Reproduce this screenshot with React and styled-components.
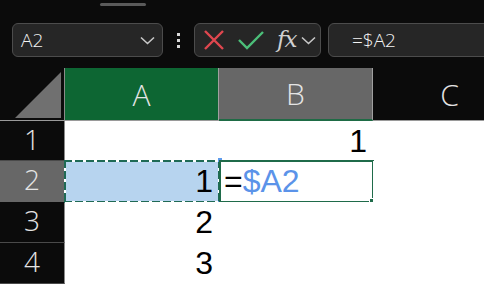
import styled, { createGlobalStyle } from "styled-components";

const GlobalStyle = createGlobalStyle`
  body {
    margin: 0;
    background: #0b0b0b;
    overflow: hidden;
  }
`;

const Page = styled.div`
  width: 484px;
  height: 284px;
  overflow: hidden;
  background: #0b0b0b;
  font-family: "Open Sans", "Noto Sans", sans-serif;
`;

const Top = styled.div`
  height: 68px;
  padding-top: 3px;
  box-sizing: border-box;
`;

const Grabber = styled.div`
  width: 46px;
  height: 3px;
  margin-left: 100px;
  border-radius: 2px;
  background: #5a5a5a;
`;

const Toolbar = styled.div`
  display: flex;
  align-items: center;
  margin-top: 17px;
  padding-left: 12px;
`;

const Box = styled.div`
  height: 34px;
  box-sizing: border-box;
  display: flex;
  align-items: center;
  flex-shrink: 0;
  background: #262626;
  border: 1px solid #4c4c4c;
  border-radius: 6px;
`;

const NameBox = styled(Box)`
  width: 151px;
  padding: 0 7px 0 8px;
  justify-content: space-between;
  color: #f4f4f4;
  font-size: 19px;
  font-weight: 300;
`;

const Dots = styled.div`
  display: flex;
  flex-direction: column;
  gap: 3px;
  margin: 0 14px 0 14px;

  span {
    width: 3px;
    height: 3px;
    background: #d8d8d8;
  }
`;

const ButtonsBox = styled(Box)`
  width: 127px;
  padding-left: 8px;
`;

const Fx = styled.span`
  font-family: "DejaVu Serif", "Liberation Serif", serif;
  font-style: italic;
  font-weight: 400;
  font-size: 23px;
  color: #d0d0d0;
  margin: -3px 5px 0 12px;
  letter-spacing: -1px;
`;

const FormulaBox = styled(Box)`
  width: 200px;
  margin-left: 7px;
  padding-left: 23px;
  color: #f4f4f4;
  font-size: 19px;
  font-weight: 300;
`;

const Sheet = styled.div`
  display: grid;
  grid-template-columns: 65px 154px 154px 154px;
  grid-template-rows: 53px 40px 41px 41px 41px;
  font-family: "Liberation Sans", Arial, sans-serif;
`;

const Corner = styled.div`
  background: #0b0b0b;
  border-right: 1px solid #8a8a8a;
  border-bottom: 1px solid #9a9a9a;
  display: flex;
  align-items: flex-end;
  justify-content: flex-end;
  padding: 0 3px 2px 0;
`;

const ColHead = styled.div`
  display: flex;
  align-items: center;
  justify-content: center;
  font-family: "Open Sans", "Noto Sans", sans-serif;
  font-weight: 300;
  font-size: 30px;
  color: #e4e4e4;
  background: ${(p) => (p.$sel ? "#0d6633" : p.$active ? "#676767" : "#0b0b0b")};
  border-right: 1px solid ${(p) => (p.$sel || p.$active ? "#a0a0a0" : "#0b0b0b")};
  border-bottom: ${(p) => (p.$active ? "2px solid #1e6b45" : "1px solid #9a9a9a")};
`;

const RowHead = styled.div`
  display: flex;
  align-items: center;
  justify-content: center;
  font-family: "Open Sans", "Noto Sans", sans-serif;
  font-weight: 300;
  font-size: 28px;
  color: #e4e4e4;
  background: ${(p) => (p.$active ? "#676767" : "#0b0b0b")};
  border-right: 1px solid #8a8a8a;
  border-bottom: 1px solid ${(p) => (p.$active ? "#676767" : "#4a4a4a")};
  padding-bottom: 4px;
`;

const Cell = styled.div`
  position: relative;
  display: flex;
  align-items: center;
  justify-content: ${(p) => (p.$left ? "flex-start" : "flex-end")};
  padding: 0 6px 0 5px;
  background: ${(p) => (p.$fill ? "#b7d4ef" : "#ffffff")};
  font-size: 32px;
  color: #000;
  white-space: nowrap;
`;

const CopyAnts = styled.div`
  position: absolute;
  inset: -1px -1px -1px -1px;
  background:
    repeating-linear-gradient(90deg, #1f6a55 0 8px, #fff 8px 11px) top / 100% 2px no-repeat,
    repeating-linear-gradient(90deg, #1f6a55 0 8px, #fff 8px 11px) bottom / 100% 2px no-repeat,
    repeating-linear-gradient(180deg, #1f6a55 0 8px, #fff 8px 11px) left / 2px 100% no-repeat,
    repeating-linear-gradient(180deg, #1f6a55 0 8px, #fff 8px 11px) right / 2px 100% no-repeat;
`;

const RefDot = styled.div`
  position: absolute;
  right: -3px;
  ${(p) => (p.$bottom ? "bottom: -3px;" : "top: -3px;")}
  width: 4px;
  height: 4px;
  background: #5d9bec;
`;

const ActiveBorder = styled.div`
  position: absolute;
  inset: -1px -1px -1px 0;
  border: 2px solid #1f6b4a;
`;

const FillHandle = styled.div`
  position: absolute;
  right: -3px;
  bottom: -3px;
  width: 5px;
  height: 5px;
  background: #1f6b4a;
  border: 1px solid #fff;
`;

const Ref = styled.span`
  color: #5b93e9;
`;

const Chevron = () => (
  <svg width="15" height="9" viewBox="0 0 15 9">
    <path d="M1 1.5 L7.5 7.5 L14 1.5" fill="none" stroke="#c8c8c8" strokeWidth="1.6" />
  </svg>
);

export default function App() {
  return (
    <Page>
      <GlobalStyle />
      <Top>
        <Grabber />
        <Toolbar>
          <NameBox>
            <span>A2</span>
            <Chevron />
          </NameBox>
          <Dots>
            <span />
            <span />
            <span />
          </Dots>
          <ButtonsBox>
            <svg width="22" height="20" viewBox="0 0 22 20">
              <path d="M2 1 L20 19 M20 1 L2 19" stroke="#e0474f" strokeWidth="2.4" fill="none" />
            </svg>
            <svg width="28" height="20" viewBox="0 0 28 20" style={{ marginLeft: 12 }}>
              <path d="M2 10 L10 18 L26 2" stroke="#4cbf79" strokeWidth="2.4" fill="none" />
            </svg>
            <Fx>fx</Fx>
            <Chevron />
          </ButtonsBox>
          <FormulaBox>=$A2</FormulaBox>
        </Toolbar>
      </Top>
      <Sheet>
        <Corner>
          <svg width="46" height="46" viewBox="0 0 46 46">
            <path d="M46 0 L46 46 L0 46 Z" fill="#707070" />
          </svg>
        </Corner>
        <ColHead $sel>A</ColHead>
        <ColHead $active>B</ColHead>
        <ColHead>C</ColHead>

        <RowHead>1</RowHead>
        <Cell />
        <Cell>1</Cell>
        <Cell />

        <RowHead $active>2</RowHead>
        <Cell $fill>
          1
          <CopyAnts />
          <RefDot />
          <RefDot $bottom />
        </Cell>
        <Cell $left>
          =<Ref>$A2</Ref>
          <ActiveBorder />
          <FillHandle />
        </Cell>
        <Cell />

        <RowHead>3</RowHead>
        <Cell>2</Cell>
        <Cell />
        <Cell />

        <RowHead>4</RowHead>
        <Cell>3</Cell>
        <Cell />
        <Cell />
      </Sheet>
    </Page>
  );
}
